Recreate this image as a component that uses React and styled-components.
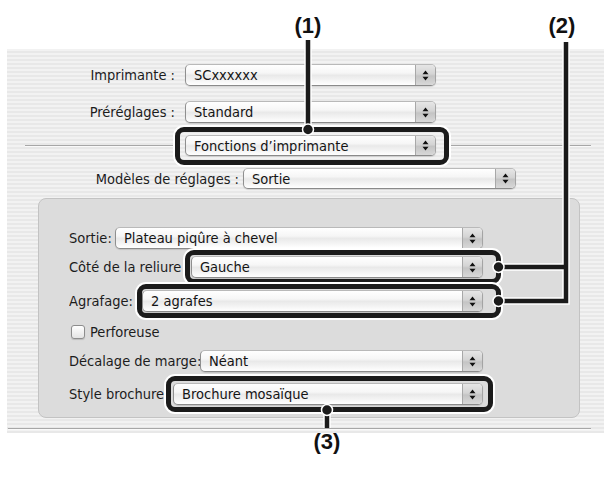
import React from 'react';
import styled, { createGlobalStyle } from 'styled-components';

const Global = createGlobalStyle`
  html, body { margin: 0; padding: 0; background: #ffffff; }
  body { font-family: "DejaVu Sans Condensed", "DejaVu Sans", "Liberation Sans", sans-serif; font-stretch: semi-condensed; }
`;

const Page = styled.div`
  position: relative;
  width: 604px;
  height: 481px;
  overflow: hidden;
  background: #ffffff;
  padding-top: 49px;
  box-sizing: border-box;
`;

const Dialog = styled.div`
  margin-left: 7px;
  height: 384px;
  padding-top: 15px;
  box-sizing: border-box;
  display: flex;
  flex-direction: column;
  background: repeating-linear-gradient(to bottom, #f2f2f2 0px, #f2f2f2 2px, #e8e8e8 2px, #e8e8e8 4px);
`;

const Row = styled.div`
  display: flex;
  align-items: center;
  flex: none;
  height: ${p => p.$h || 22}px;
  margin-top: ${p => p.$mt || 0}px;
  padding-left: ${p => p.$pl || 0}px;
`;

const Label = styled.div`
  flex: none;
  width: ${p => p.$w}px;
  margin-right: ${p => p.$gap || 0}px;
  text-align: ${p => (p.$right ? 'right' : 'left')};
  font-size: 14.5px;
  color: #1c1c1c;
  white-space: nowrap;
  overflow: hidden;
`;

const RuleLine = styled.div`
  flex: ${p => (p.$grow ? '1' : 'none')};
  width: ${p => (p.$w ? `${p.$w}px` : 'auto')};
  margin-left: ${p => p.$ml || 0}px;
  margin-right: ${p => p.$mr || 0}px;
  height: 0;
  border-top: 1px solid #a7a7a7;
  border-bottom: 1px solid #fafafa;
`;

const Anchor = styled.div`
  position: relative;
  display: flex;
  flex: ${p => (p.$w ? 'none' : '1')};
  width: ${p => (p.$w ? `${p.$w}px` : 'auto')};
  height: 100%;
`;

const Ring = styled.div`
  position: absolute;
  left: ${p => p.$l}px;
  right: ${p => p.$r}px;
  top: ${p => p.$t}px;
  bottom: ${p => p.$b}px;
  border: 5px solid #1b1b1b;
  border-radius: 9px;
  box-shadow: 0 0 0 2px #ffffff;
  z-index: 3;
  pointer-events: none;
`;

const PopupBox = styled.div`
  flex: 1;
  display: flex;
  align-items: center;
  height: 100%;
  box-sizing: border-box;
  border: 1px solid #a4a4a4;
  border-top-color: #b9b9b9;
  border-bottom-color: #8a8a8a;
  border-left-color: #8f8f8f;
  border-radius: 5px;
  background: linear-gradient(to bottom, #ffffff 0%, #f6f6f6 40%, #e9e9e9 52%, #f3f3f3 75%, #ffffff 100%);
  box-shadow: 0 1px 1px rgba(0, 0, 0, 0.12);
  overflow: hidden;
`;

const PopupText = styled.span`
  flex: 1;
  padding-left: 8px;
  font-size: 14.5px;
  color: #141414;
  white-space: nowrap;
  overflow: hidden;
`;

const Stepper = styled.span`
  flex: none;
  width: 19px;
  height: 100%;
  display: flex;
  align-items: center;
  justify-content: center;
  border-left: 1px solid #a8a8a8;
  background: linear-gradient(to bottom, #e6e6e6 0%, #d4d4d4 45%, #c4c4c4 55%, #d8d8d8 100%);
`;

const Panel = styled.div`
  flex: none;
  margin-top: 9px;
  margin-left: 31px;
  width: 542px;
  height: 220px;
  box-sizing: border-box;
  padding: 28px 96px 0 30px;
  border: 1px solid #c3c3c3;
  border-radius: 8px;
  background: #dcdcdc;
  display: flex;
  flex-direction: column;
`;

const CheckRow = styled.label`
  display: flex;
  align-items: center;
  height: 22px;
  margin-top: ${p => p.$mt}px;
  padding-left: 2px;
  font-size: 14.5px;
  color: #1c1c1c;
`;

const CheckBox = styled.span`
  width: 14px;
  height: 14px;
  box-sizing: border-box;
  margin-right: 5px;
  border: 1px solid #8d8d8d;
  border-radius: 3px;
  background: linear-gradient(to bottom, #ffffff, #e4e4e4);
  box-shadow: 0 1px 1px rgba(0, 0, 0, 0.15);
`;

const BottomRule = styled.div`
  margin-top: 10px;
  margin-left: 1px;
  margin-right: 13px;
  border-top: 1px solid #a7a7a7;
  border-bottom: 1px solid #fafafa;
`;

const Overlay = styled.svg`
  position: absolute;
  left: 0;
  top: 0;
  z-index: 5;
  pointer-events: none;
`;

const CalloutNum = styled.div`
  position: absolute;
  left: ${p => p.$x - 25}px;
  top: ${p => p.$y}px;
  width: 50px;
  text-align: center;
  font-family: "Liberation Sans Narrow", "Liberation Sans", Arial, sans-serif;
  font-stretch: condensed;
  font-weight: bold;
  font-size: 22px;
  line-height: 26px;
  color: #111111;
  z-index: 6;
`;

const Arrows = () => (
  <svg width="7" height="11" viewBox="0 0 7 11">
    <path d="M3.5 0.5 L6.5 4.2 H0.5 Z M3.5 10.5 L6.5 6.8 H0.5 Z" fill="#111" />
  </svg>
);

function Popup({ value, w, ring }) {
  return (
    <Anchor $w={w}>
      <PopupBox>
        <PopupText>{value}</PopupText>
        <Stepper><Arrows /></Stepper>
      </PopupBox>
      {ring && <Ring $l={ring[0]} $r={ring[1]} $t={ring[2]} $b={ring[3]} />}
    </Anchor>
  );
}

function Leader({ d }) {
  return (
    <>
      <path d={d} stroke="#ffffff" strokeWidth="7.5" fill="none" strokeLinejoin="miter" />
      <path d={d} stroke="#1b1b1b" strokeWidth="4.5" fill="none" strokeLinejoin="miter" />
    </>
  );
}

function Dot({ x, y }) {
  return <circle cx={x} cy={y} r="5.5" fill="#1b1b1b" stroke="#ffffff" strokeWidth="1.5" />;
}

export default function App() {
  return (
    <Page>
      <Global />
      <Dialog>
        <Row>
          <Label $w={168} $gap={10} $right>Imprimante :</Label>
          <Popup value="SCxxxxxx" w={251} />
        </Row>
        <Row $mt={15}>
          <Label $w={168} $gap={10} $right>Préréglages :</Label>
          <Popup value="Standard" w={251} />
        </Row>
        <Row $mt={12} $h={21} $pl={18}>
          <RuleLine $w={150} $mr={10} />
          <Popup value="Fonctions d’imprimante" w={251} ring={[-10, -13, -8, -9]} />
          <RuleLine $grow $ml={10} $mr={13} />
        </Row>
        <Row $mt={12} $h={21}>
          <Label $w={232} $gap={4} $right>Modèles de réglages :</Label>
          <Popup value="Sortie" w={273} />
        </Row>
        <Panel>
          <Row>
            <Label $w={46}>Sortie:</Label>
            <Popup value="Plateau piqûre à chevel" />
          </Row>
          <Row $mt={7}>
            <Label $w={122}>Côté de la reliure</Label>
            <Popup value="Gauche" ring={[-6, -18, -6, -6]} />
          </Row>
          <Row $mt={12}>
            <Label $w={73}>Agrafage:</Label>
            <Popup value="2 agrafes" ring={[-5, -18, -6, -6]} />
          </Row>
          <CheckRow $mt={9}>
            <CheckBox />
            Perforeuse
          </CheckRow>
          <Row $mt={7}>
            <Label $w={131}>Décalage de marge:</Label>
            <Popup value="Néant" />
          </Row>
          <Row $mt={11}>
            <Label $w={104}>Style brochure</Label>
            <Popup value="Brochure mosaïque" ring={[-7, -10, -7, -7]} />
          </Row>
        </Panel>
        <BottomRule />
      </Dialog>

      <Overlay width="604" height="481" viewBox="0 0 604 481">
        <Leader d="M308 40 V129" />
        <Dot x={308} y={129.5} />
        <Leader d="M566 42 V301 H499 M566 267 H499" />
        <Dot x={498.5} y={267} />
        <Dot x={498.5} y={301} />
        <Leader d="M327 410 V428" />
        <Dot x={327} y={410} />
      </Overlay>
      <CalloutNum $x={308} $y={13}>(1)</CalloutNum>
      <CalloutNum $x={562} $y={13}>(2)</CalloutNum>
      <CalloutNum $x={327} $y={429}>(3)</CalloutNum>
    </Page>
  );
}
